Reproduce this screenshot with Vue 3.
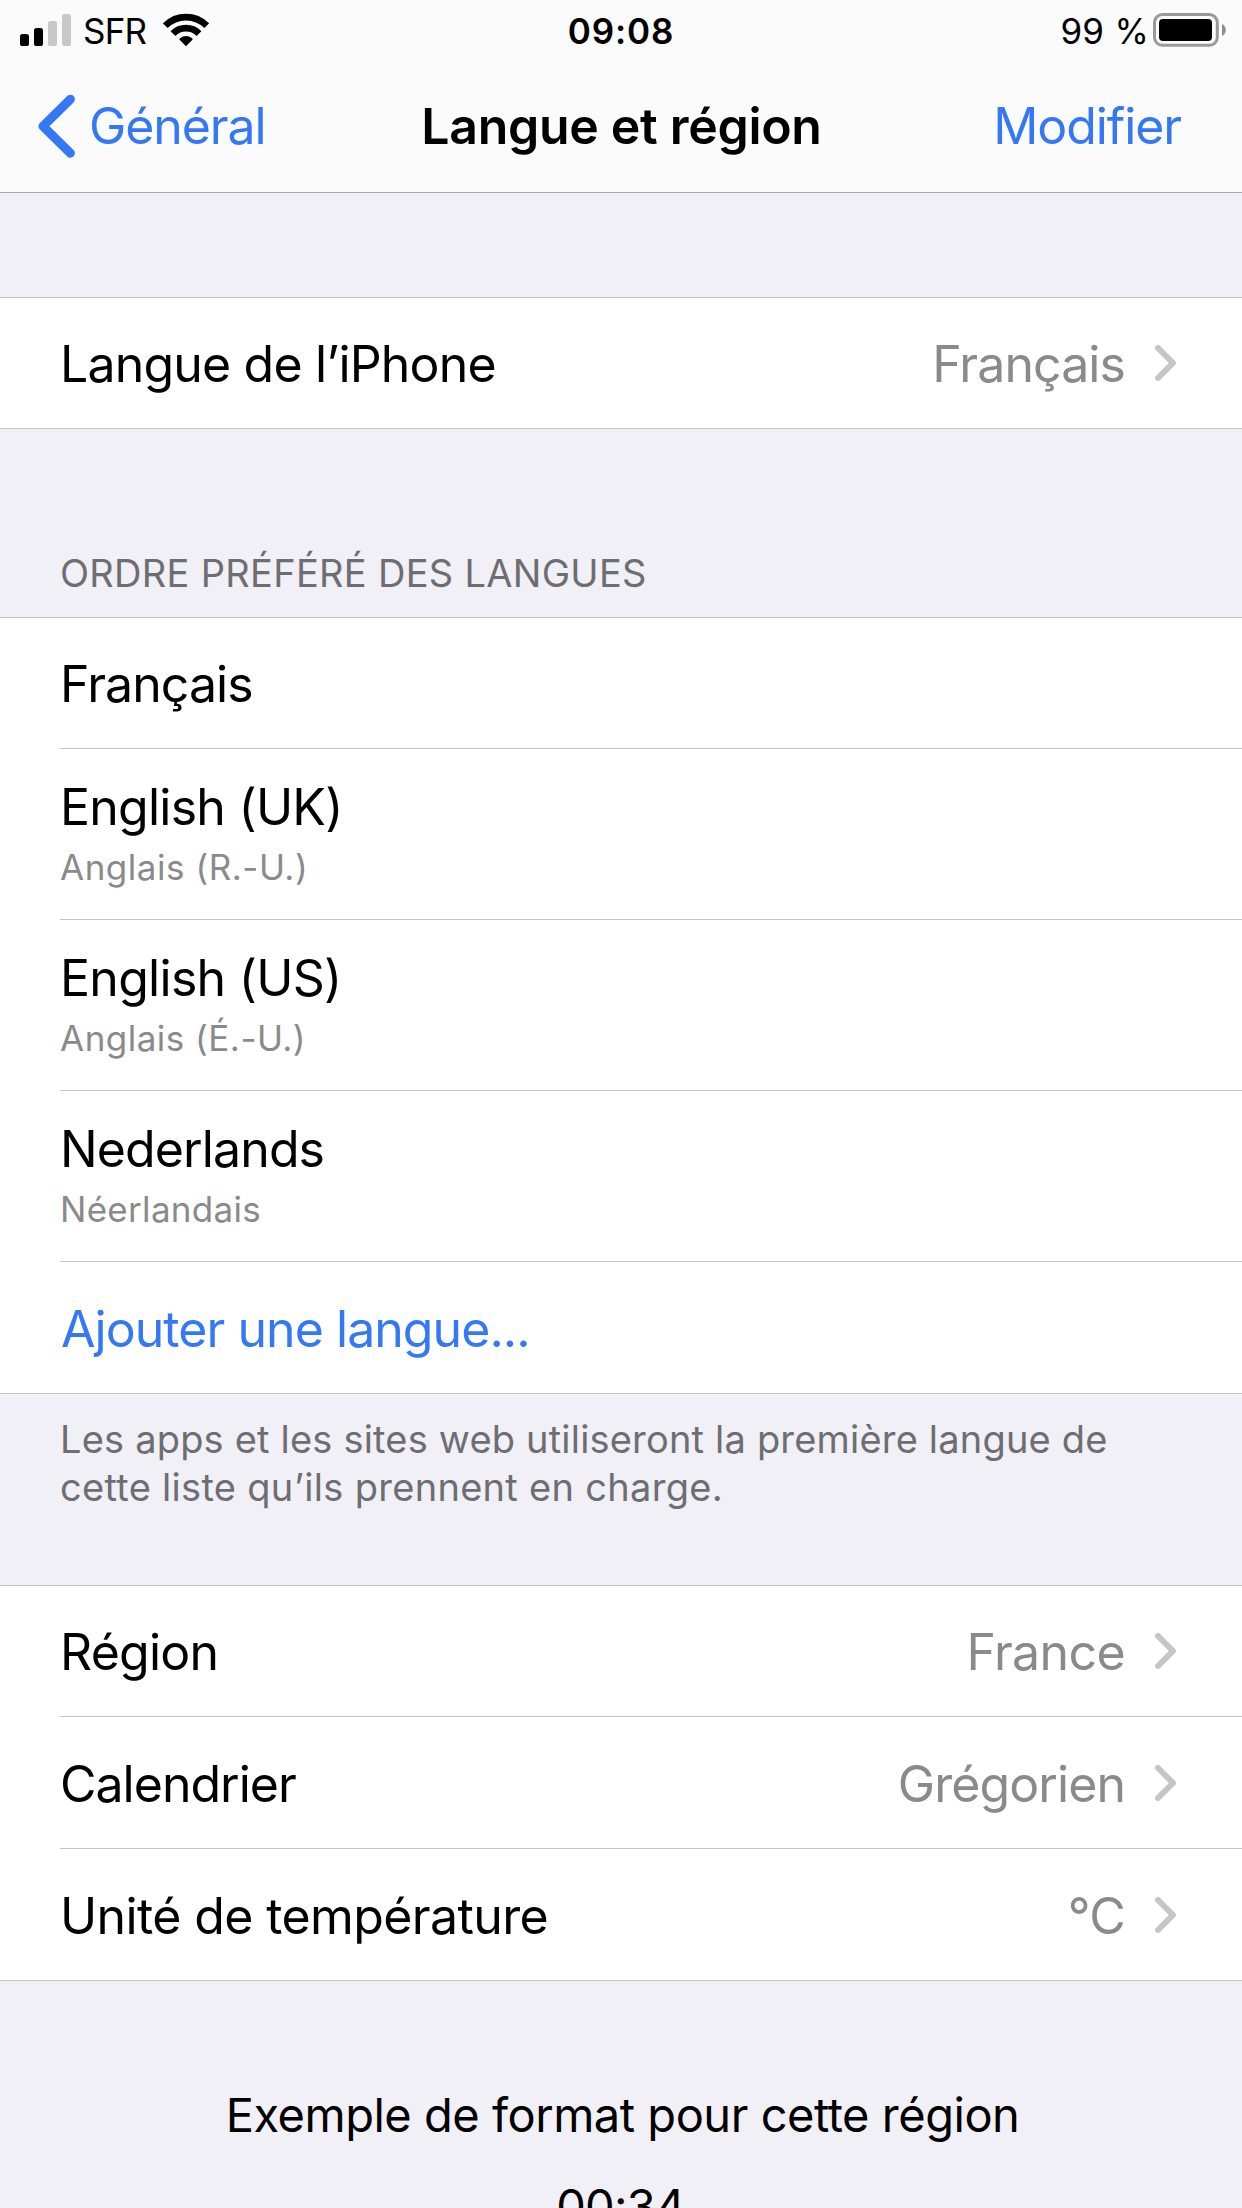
<script setup>
const iphoneLanguage = { label: 'Langue de l’iPhone', value: 'Français', labelTracking: -0.82, valueTracking: -0.92 }

const languages = [
  { name: 'Français', tracking: -0.92 },
  { name: 'English (UK)', tracking: -0.76, local: 'Anglais (R.-U.)', localTracking: 0.52 },
  { name: 'English (US)', tracking: -0.72, local: 'Anglais (É.-U.)', localTracking: 0.48 },
  { name: 'Nederlands', tracking: -0.88, local: 'Néerlandais', localTracking: 0.3 }
]

const regionSettings = [
  { label: 'Région', value: 'France', labelTracking: -0.75, valueTracking: -0.61 },
  { label: 'Calendrier', value: 'Grégorien', labelTracking: -0.99, valueTracking: -0.93 },
  { label: 'Unité de température', value: '°C', labelTracking: -0.61, valueTracking: -0.72 }
]

const px = (n) => ({ letterSpacing: `${n}px` })
</script>

<template>
  <div class="screen">
    <header class="top">
      <div class="status">
        <div class="status-left">
          <svg class="signal" width="51" height="32" viewBox="0 0 51 32">
            <rect x="0" y="20" width="9" height="12" rx="2.6" />
            <rect x="14" y="14" width="9" height="18" rx="2.6" />
            <rect x="28" y="7" width="9" height="25" rx="2.6" fill="#c8c8c8" />
            <rect x="42" y="0" width="9" height="32" rx="2.6" fill="#c8c8c8" />
          </svg>
          <span class="carrier">SFR</span>
          <svg class="wifi" width="46" height="34" viewBox="0 0 46 34">
            <g fill="none" stroke="#000" stroke-width="6.8">
              <path d="M2.3 12.7A29.3 29.3 0 0 1 43.7 12.7" />
              <path d="M10 20.6A18.4 18.4 0 0 1 36 20.6" />
            </g>
            <path d="M23 33.2L16.6 26.8Q16 26 16.9 25.3A10.4 10.4 0 0 1 29.1 25.3Q30 26 29.4 26.8Z" />
          </svg>
        </div>
        <span class="clock">09:08</span>
        <div class="status-right">
          <span class="percent">99 %</span>
          <svg class="battery" width="74" height="34" viewBox="0 0 74 34">
            <rect x="1.5" y="1.5" width="62.8" height="30.8" rx="8" fill="none" stroke="#999" stroke-width="3" />
            <rect x="6" y="6" width="53" height="22" rx="4" />
            <path d="M69 11C74 13 74 21 69 23Z" fill="#8e8e8e" />
          </svg>
        </div>
      </div>
      <nav class="nav">
        <a class="back">
          <svg width="40" height="66" viewBox="0 0 40 66">
            <path d="M34.4 6.2L7 33.2L34.4 60.2" fill="none" stroke="#3478f6" stroke-width="9" stroke-linecap="round" stroke-linejoin="round" />
          </svg>
          <span>Général</span>
        </a>
        <h1>Langue et région</h1>
        <a class="edit">Modifier</a>
      </nav>
    </header>

    <section class="group first">
      <div class="row">
        <span class="label" :style="px(iphoneLanguage.labelTracking)">{{ iphoneLanguage.label }}</span>
        <span class="value" :style="px(iphoneLanguage.valueTracking)">{{ iphoneLanguage.value }}</span>
        <svg class="chevron" width="24" height="38" viewBox="0 0 24 38">
          <path d="M5 4L20 19L5 34" />
        </svg>
      </div>
    </section>

    <h2>ORDRE PRÉFÉRÉ DES LANGUES</h2>
    <section class="group">
      <div v-for="l in languages" :key="l.name" class="row" :class="{ double: l.local }">
        <span class="label" :style="px(l.tracking)">{{ l.name }}</span>
        <span v-if="l.local" class="local" :style="px(l.localTracking)">{{ l.local }}</span>
      </div>
      <div class="row tall">
        <a class="label add">Ajouter une langue...</a>
      </div>
    </section>
    <p class="note">
      <span>Les apps et les sites web utiliseront la première langue de</span><br />
      <span class="note-end">cette liste qu’ils prennent en charge.</span>
    </p>

    <section class="group">
      <div v-for="(s, i) in regionSettings" :key="s.label" class="row" :class="{ tall: i > 0 }">
        <span class="label" :style="px(s.labelTracking)">{{ s.label }}</span>
        <span class="value" :style="px(s.valueTracking)">{{ s.value }}</span>
        <svg class="chevron" width="24" height="38" viewBox="0 0 24 38">
          <path d="M5 4L20 19L5 34" />
        </svg>
      </div>
    </section>

    <footer class="example">
      <div class="example-title">Exemple de format pour cette région</div>
      <div class="example-time">00:34</div>
    </footer>
  </div>
</template>

<style>
body {
  margin: 0;
  background: #f1f0f6;
}
</style>

<style scoped>
.screen {
  width: 1242px;
  height: 2208px;
  overflow: hidden;
  background: #f1f0f6;
  color: #000;
  font-family: Inter, "Liberation Sans", sans-serif;
  font-size: 50px;
  line-height: 60px;
  white-space: nowrap;
}
svg {
  display: block;
  flex: none;
}
.top {
  height: 192px;
  background: #fbfbfb;
  border-bottom: 1px solid #a9a9ad;
}
.status {
  display: grid;
  grid-template-columns: 1fr auto 1fr;
  height: 60px;
  padding: 0 15px 0 20px;
  font-size: 35px;
}
.status-left,
.status-right {
  display: flex;
  align-items: flex-start;
}
.status-right {
  justify-content: flex-end;
}
.carrier,
.clock,
.percent {
  padding-top: 1px;
}
.signal {
  margin-top: 14px;
}
.carrier {
  margin-left: 12px;
  letter-spacing: -0.8px;
}
.wifi {
  margin: 13px 0 0 17px;
}
.clock {
  font-weight: 600;
  letter-spacing: 0.9px;
  margin-left: -5px;
}
.percent {
  letter-spacing: 0.25px;
}
.battery {
  margin: 13px 0 0 4px;
}
.nav {
  display: grid;
  grid-template-columns: 1fr auto 1fr;
  align-items: center;
  height: 132px;
  padding: 0 61px 0 36px;
}
.back,
.edit {
  color: #3478f6;
  letter-spacing: -1.09px;
}
.back {
  display: flex;
  align-items: center;
  gap: 13px;
}
.edit {
  justify-self: end;
}
h1 {
  margin: 0 0 0 26px;
  font-size: 50px;
  font-weight: 600;
  letter-spacing: -0.3px;
}
.group {
  background: #fff;
  border-top: 1px solid #c6c6c8;
  border-bottom: 1px solid #c6c6c8;
}
.first {
  margin-top: 104px;
}
.row {
  display: flex;
  align-items: center;
  height: 130px;
  margin-left: 60px;
  padding-right: 65px;
}
.row + .row {
  border-top: 1px solid #c6c6c8;
}
.label,
.value {
  padding-top: 1px;
}
.tall {
  height: 131px;
}
.tall .label,
.tall .value {
  padding-top: 3px;
}
.double {
  flex-direction: column;
  align-items: flex-start;
  box-sizing: content-box;
  height: 142px;
  padding-top: 28px;
}
.double .label {
  padding: 0;
}
.local {
  margin-top: 9px;
  color: #8a8a8c;
  font-size: 35px;
  line-height: 42px;
}
.value {
  margin-left: auto;
  color: #8a8a8c;
}
.chevron {
  margin-left: 28px;
}
.chevron path {
  fill: none;
  stroke: #c5c5c7;
  stroke-width: 6;
  stroke-linecap: round;
  stroke-linejoin: round;
}
.add {
  margin-left: 1px;
  color: #3478f6;
  letter-spacing: -0.95px;
}
h2 {
  margin: 120px 0 20px 60px;
  color: #6d6d72;
  font-size: 38px;
  font-weight: 400;
  line-height: 48px;
  letter-spacing: 0.3px;
}
.note {
  margin: 0;
  padding: 21px 0 74px 60px;
  color: #6d6d72;
  font-size: 38px;
  line-height: 48px;
  letter-spacing: 0.19px;
}
.note-end {
  letter-spacing: 0.3px;
}
.example {
  padding: 104px 0 0 3px;
  font-size: 47px;
  text-align: center;
}
.example-title {
  letter-spacing: -0.48px;
}
.example-time {
  margin: 31px 4px 0 0;
  letter-spacing: -0.7px;
}
</style>
